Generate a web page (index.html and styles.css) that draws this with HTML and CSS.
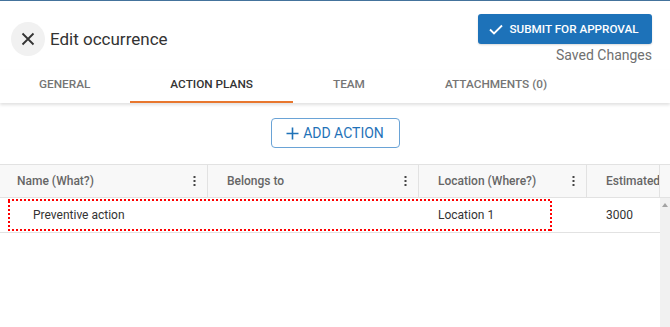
FILE: index.html
```html
<!DOCTYPE html>
<html lang="en">
<head>
    <meta charset="UTF-8">
    <meta name="viewport" content="width=device-width, initial-scale=1.0">
    <title>Edit occurrence</title>
    <link rel="stylesheet" href="styles.css">
</head>
<body>
    <div class="header">
        <div class="title-group">
            <button class="close-btn" aria-label="Close">
                <svg width="14" height="14" viewBox="0 0 14 14"><path d="M1.5 1.5 L12.5 12.5 M12.5 1.5 L1.5 12.5" stroke="#333" stroke-width="1.8" fill="none"/></svg>
            </button>
            <h1>Edit occurrence</h1>
        </div>
        <div class="status-group">
            <button class="submit-btn">
                <svg width="14" height="11" viewBox="0 0 14 11"><path d="M1 5.5 L5 9.5 L13 1.5" stroke="#fff" stroke-width="1.8" fill="none"/></svg>
                SUBMIT FOR APPROVAL
            </button>
            <div class="saved">Saved Changes</div>
        </div>
    </div>

    <div class="tabs">
        <div class="tab">GENERAL</div>
        <div class="tab active">ACTION PLANS</div>
        <div class="tab">TEAM</div>
        <div class="tab">ATTACHMENTS (0)</div>
    </div>

    <div class="actions">
        <button class="add-btn">
            <svg width="13" height="13" viewBox="0 0 13 13"><path d="M6.5 0.5 V12.5 M0.5 6.5 H12.5" stroke="#1f72b8" stroke-width="1.6" fill="none"/></svg>
            ADD ACTION
        </button>
    </div>

    <div class="grid">
        <div class="grid-head">
            <div class="col">Name (What?)<svg class="dots" width="3" height="10" viewBox="0 0 3 10"><rect x="0.5" y="0" width="2" height="2"/><rect x="0.5" y="4" width="2" height="2"/><rect x="0.5" y="8" width="2" height="2"/></svg></div>
            <div class="col">Belongs to<svg class="dots" width="3" height="10" viewBox="0 0 3 10"><rect x="0.5" y="0" width="2" height="2"/><rect x="0.5" y="4" width="2" height="2"/><rect x="0.5" y="8" width="2" height="2"/></svg></div>
            <div class="col">Location (Where?)<svg class="dots" width="3" height="10" viewBox="0 0 3 10"><rect x="0.5" y="0" width="2" height="2"/><rect x="0.5" y="4" width="2" height="2"/><rect x="0.5" y="8" width="2" height="2"/></svg></div>
            <div class="col clip">Estimated</div>
            <div class="col spacer"></div>
        </div>
        <div class="grid-body">
            <div class="rows">
                <div class="row">
                    <div class="cell indent">Preventive action</div>
                    <div class="cell"></div>
                    <div class="cell">Location 1</div>
                    <div class="cell">3000</div>
                </div>
                <div class="selection"></div>
            </div>
            <div class="scrollbar"><span class="arrow"></span></div>
        </div>
    </div>
</body>
</html>
```

FILE: styles.css
```css
body {
    margin: 0;
    font-family: Roboto, "Liberation Sans", sans-serif;
    color: #333;
    background: #fff;
    border-top: 1px solid #44739c;
    height: 326px;
    overflow: hidden;
}
.header {
    display: flex;
    justify-content: space-between;
    align-items: flex-start;
    height: 69px;
    padding: 13px 18px 0 11px;
    box-sizing: border-box;
}
.title-group {
    display: flex;
    align-items: center;
    margin-top: 8px;
}
.close-btn {
    width: 34px;
    height: 34px;
    border-radius: 50%;
    border: none;
    background: #f1f1f1;
    display: flex;
    align-items: center;
    justify-content: center;
    padding: 0;
    margin-right: 5px;
}
h1 {
    font-size: 17px;
    font-weight: 400;
    margin: 0;
    color: #333;
}
.status-group {
    display: flex;
    flex-direction: column;
    align-items: flex-end;
}
.submit-btn {
    height: 30px;
    width: 174px;
    background: #1d72b9;
    color: #fff;
    border: none;
    border-radius: 3px;
    font-family: inherit;
    font-size: 11.7px;
    font-weight: 500;
    display: flex;
    align-items: center;
    justify-content: center;
    gap: 6px;
    padding: 0 2px 0 0;
    box-shadow: 0 1px 2px rgba(0,0,0,0.15);
}
.saved {
    font-size: 14px;
    color: #707070;
    margin-top: 3px;
    line-height: 16px;
}
.tabs {
    display: flex;
    height: 33px;
    box-shadow: 0 2px 3px rgba(0,0,0,0.12);
}
.tab {
    padding: 0 40px 2px;
    line-height: 29px;
    border-bottom: 2px solid transparent;
    font-size: 11.8px;
    font-weight: 500;
    color: #757575;
}
.tab:first-child {
    padding-left: 39px;
}
.tab.active {
    color: #333;
    border-bottom-color: #e8772e;
}
.actions {
    display: flex;
    justify-content: center;
    margin-top: 15px;
}
.add-btn {
    height: 30px;
    width: 129px;
    border: 1px solid #6aa3d6;
    border-radius: 4px;
    background: #fff;
    color: #1f72b8;
    font-family: inherit;
    font-size: 14px;
    display: flex;
    align-items: center;
    justify-content: center;
    gap: 4px;
    padding: 0;
}
.grid {
    margin-top: 16px;
    font-size: 12px;
}
.grid-head {
    display: grid;
    grid-template-columns: 208px 211px 168px 73px 10px;
    height: 34px;
    background: #f8f8f8;
    border-top: 1px solid #e2e2e2;
    border-bottom: 1px solid #e2e2e2;
    box-sizing: border-box;
}
.grid-head .col {
    display: flex;
    align-items: center;
    justify-content: space-between;
    padding: 0 11px 0 19px;
    border-right: 1px solid #e2e2e2;
    font-weight: 500;
    color: #666;
    white-space: nowrap;
}
.grid-head .col:first-child {
    padding-left: 17px;
}
.grid-head .clip {
    overflow: hidden;
    padding-right: 0;
}
.grid-head .spacer {
    border-right: none;
}
.dots {
    fill: #444;
}
.grid-body {
    display: flex;
    height: 129px;
}
.rows {
    position: relative;
    width: 660px;
}
.row {
    display: grid;
    grid-template-columns: 208px 211px 168px 73px;
    height: 35px;
    border-bottom: 1px solid #e2e2e2;
    box-sizing: border-box;
}
.cell {
    padding-left: 19px;
    line-height: 35px;
    color: #333;
}
.cell.indent {
    padding-left: 33px;
}
.selection {
    position: absolute;
    left: 8px;
    top: 1px;
    width: 544px;
    height: 32px;
    background:
        linear-gradient(90deg, #f00 50%, transparent 50%) top left / 4px 2px repeat-x,
        linear-gradient(90deg, #f00 50%, transparent 50%) bottom left / 4px 2px repeat-x,
        linear-gradient(0deg, #f00 50%, transparent 50%) top left / 2px 4px repeat-y,
        linear-gradient(0deg, #f00 50%, transparent 50%) top right / 2px 4px repeat-y;
}
.scrollbar {
    width: 10px;
    background: #f1f1f1;
    position: relative;
}
.arrow {
    position: absolute;
    left: 2px;
    top: 5px;
    border-left: 3px solid transparent;
    border-right: 3px solid transparent;
    border-bottom: 4px solid #a3a3a3;
}
```
